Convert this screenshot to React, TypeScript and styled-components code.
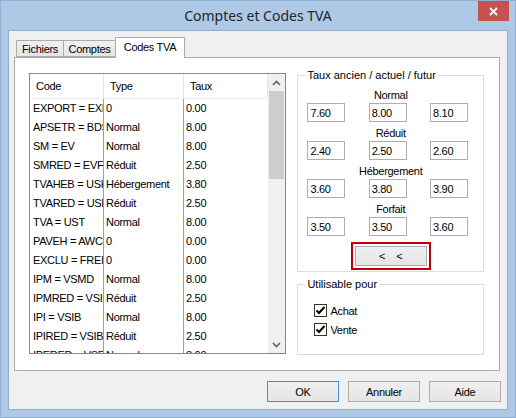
import React from 'react';
import styled, { createGlobalStyle } from 'styled-components';

const GlobalStyle = createGlobalStyle`
  html, body {
    margin: 0;
    padding: 0;
    background: #adc9e6;
  }
  * {
    box-sizing: border-box;
  }
`

const Window = styled.div`
  width: 516px;
  height: 418px;
  background: #adc9e6;
  border: 1px solid #8fafd6;
  display: flex;
  flex-direction: column;
  font-family: "Liberation Sans", Arial, sans-serif;
  font-size: 11px;
  letter-spacing: -0.3px;
  color: #000;
`

const TitleBar = styled.div`
  height: 29px;
  display: grid;
  grid-template-columns: 37px 1fr 31px;
  padding-right: 6px;
  align-items: start;
`

const Title = styled.div`
  grid-column: 2;
  text-align: center;
  font-family: "Noto Sans", "Open Sans", sans-serif;
  font-size: 14px;
  letter-spacing: 0;
  line-height: 29px;
  color: #262626;
`

const CloseBtn = styled.div`
  height: 20px;
  background: #c75050;
  display: flex;
  align-items: center;
  justify-content: center;
`

const Client = styled.div`
  flex: 1;
  min-height: 0;
  margin: 0 7px 7px;
  background: #f0f0f0;
  border: 1px solid #92abca;
  padding: 7px 7px 7px 5px;
  display: flex;
  flex-direction: column;
`

const TabStrip = styled.div`
  display: flex;
  align-items: flex-end;
  height: 20px;
  padding-left: 2px;
  margin-bottom: -1px;
  position: relative;
  z-index: 1;
`

const Tab = styled.div<{ $active?: boolean; $w: number }>`
  width: ${p => p.$w}px;
  height: ${p => (p.$active ? '21px' : '17px')};
  margin-bottom: ${p => (p.$active ? '0' : '1px')};
  margin-left: -1px;
  padding-top: ${p => (p.$active ? '2px' : '1px')};
  border: 1px solid #acacac;
  border-bottom: ${p => (p.$active ? 'none' : '1px solid #acacac')};
  background: ${p => (p.$active ? '#fff' : 'linear-gradient(#f0f0f0, #e5e5e5)')};
  line-height: 14px;
  text-align: center;
  white-space: nowrap;
  &:first-child {
    margin-left: 0;
  }
`

const Panel = styled.div`
  flex: 1;
  min-height: 0;
  background: #fff;
  border: 1px solid #acacac;
  padding: 11px 15px 16px 14px;
  display: flex;
  gap: 11px;
`

const List = styled.div`
  width: 258px;
  min-height: 0;
  margin-top: 4px;
  border: 1px solid #828790;
  display: grid;
  grid-template-columns: 1fr 17px;
  overflow: hidden;
`

const ListBody = styled.div`
  overflow: hidden;
`

const HeaderRow = styled.div`
  display: grid;
  grid-template-columns: 74px 80px 1fr;
  height: 25px;
  border-bottom: 1px solid #e5ecf4;
`

const HeaderCell = styled.div`
  padding-left: 6px;
  line-height: 24px;
  border-right: 1px solid #e5e5e5;
`

const Row = styled.div`
  display: grid;
  grid-template-columns: 74px 80px 1fr;
  height: 19px;
`

const Cell = styled.div<{ $pad: number; $line?: boolean }>`
  padding-left: ${p => p.$pad}px;
  line-height: 19px;
  white-space: nowrap;
  overflow: hidden;
  border-right: ${p => (p.$line ? '1px solid #a0a0a0' : 'none')};
`

const ScrollBar = styled.div`
  background: #f0f0f0;
  display: flex;
  flex-direction: column;
  min-height: 0;
`

const ScrollArrow = styled.div`
  height: 17px;
  flex-shrink: 0;
  display: flex;
  align-items: center;
  justify-content: center;
`

const Thumb = styled.div`
  height: 88px;
  flex-shrink: 0;
  margin: 0 1px;
  background: #cdcdcd;
`

const Spacer = styled.div`
  flex: 1;
`

const Side = styled.div`
  width: 187px;
  display: flex;
  flex-direction: column;
  gap: 6px;
`

const Group = styled.fieldset<{ $pt: number; $pb: number }>`
  margin: 0;
  border: 1px solid #dcdcdc;
  padding: ${p => p.$pt}px 6px ${p => p.$pb}px;
  min-width: 0;
`

const Legend = styled.legend`
  padding: 0 2px;
  line-height: 13px;
  margin-left: 1px;
  letter-spacing: 0;
`

const RateBlock = styled.div`
  display: flex;
  flex-direction: column;
  & + & {
    margin-top: 4px;
  }
`

const RateLabel = styled.div`
  height: 14px;
  line-height: 14px;
  margin-bottom: 1px;
  text-align: center;
`

const InputRow = styled.div`
  display: flex;
  justify-content: space-between;
  padding: 0 9px 0 3px;
`

const RateInput = styled.input`
  width: 38px;
  height: 19px;
  border: 1px solid #abadb3;
  padding: 0 0 0 2px;
  font-family: "Liberation Sans", Arial, sans-serif;
  font-size: 11px;
  letter-spacing: -0.3px;
  color: #000;
  background: #fff;
  outline: none;
`

const Highlight = styled.div`
  align-self: center;
  margin-top: 2px;
  width: 80px;
  height: 28px;
  border: 2px solid #c00000;
  padding: 2px;
`

const Button = styled.div<{ $default?: boolean }>`
  width: 72px;
  height: 21px;
  border: 1px solid ${p => (p.$default ? '#3c8fe3' : '#acacac')};
  background: linear-gradient(#f0f0f0, #e5e5e5);
  display: flex;
  align-items: center;
  justify-content: center;
  white-space: pre;
`

const ShiftButton = styled(Button)`
  width: 100%;
  height: 100%;
`

const CheckRow = styled.div`
  height: 19px;
  flex-shrink: 0;
  display: flex;
  align-items: center;
  gap: 3px;
  padding-left: 10px;
`

const CheckBox = styled.div`
  width: 13px;
  height: 13px;
  border: 1px solid #333;
  background: #fff;
  display: flex;
  align-items: center;
  justify-content: center;
`

const Footer = styled.div`
  display: flex;
  justify-content: flex-end;
  gap: 9px;
  padding-top: 10px;
  margin-right: -1px;
`

const rows = [
  ['EXPORT = EXP', '0', '0.00'],
  ['APSETR = BDS', 'Normal', '8.00'],
  ['SM = EV', 'Normal', '8.00'],
  ['SMRED = EVFR', 'Réduit', '2.50'],
  ['TVAHEB = USH', 'Hébergement', '3.80'],
  ['TVARED = USR', 'Réduit', '2.50'],
  ['TVA = UST', 'Normal', '8.00'],
  ['PAVEH = AWCH', '0', '0.00'],
  ['EXCLU = FREI', '0', '0.00'],
  ['IPM = VSMD', 'Normal', '8.00'],
  ['IPMRED = VSIR', 'Réduit', '2.50'],
  ['IPI = VSIB', 'Normal', '8.00'],
  ['IPIRED = VSIBR', 'Réduit', '2.50'],
  ['IPERED = VSER', 'Normal', '8.00'],
]

const rates = [
  { label: 'Normal', values: ['7.60', '8.00', '8.10'] },
  { label: 'Réduit', values: ['2.40', '2.50', '2.60'] },
  { label: 'Hébergement', values: ['3.60', '3.80', '3.90'] },
  { label: 'Forfait', values: ['3.50', '3.50', '3.60'] },
]

const Chevron = ({ up }: { up?: boolean }) => (
  <svg width="9" height="6" viewBox="0 0 9 6">
    <path d={up ? 'M1 5 L4.5 1.5 L8 5' : 'M1 1 L4.5 4.5 L8 1'} fill="none" stroke="#606060" strokeWidth="1.6" />
  </svg>
)

const Check = () => (
  <svg width="11" height="11" viewBox="0 0 11 11">
    <path d="M1.5 5.5 L4 8 L9.5 2" fill="none" stroke="#000" strokeWidth="2" />
  </svg>
)

const App = () => {
  return (
    <Window>
      <GlobalStyle />
      <TitleBar>
        <Title>Comptes et Codes TVA</Title>
        <CloseBtn>
          <svg width="9" height="9" viewBox="0 0 9 9">
            <path d="M1 1 L8 8 M8 1 L1 8" stroke="#fff" strokeWidth="1.8" />
          </svg>
        </CloseBtn>
      </TitleBar>
      <Client>
        <TabStrip>
          <Tab $w={48}>Fichiers</Tab>
          <Tab $w={53}>Comptes</Tab>
          <Tab $w={70} $active>Codes TVA</Tab>
        </TabStrip>
        <Panel>
          <List>
            <ListBody>
              <HeaderRow>
                <HeaderCell>Code</HeaderCell>
                <HeaderCell>Type</HeaderCell>
                <HeaderCell>Taux</HeaderCell>
              </HeaderRow>
              {rows.map(r => (
                <Row key={r[0]}>
                  <Cell $pad={3} $line>{r[0]}</Cell>
                  <Cell $pad={2} $line>{r[1]}</Cell>
                  <Cell $pad={2}>{r[2]}</Cell>
                </Row>
              ))}
            </ListBody>
            <ScrollBar>
              <ScrollArrow><Chevron up /></ScrollArrow>
              <Thumb />
              <Spacer />
              <ScrollArrow><Chevron /></ScrollArrow>
            </ScrollBar>
          </List>
          <Side>
            <Group $pt={6} $pb={1}>
              <Legend>Taux ancien / actuel / futur</Legend>
              {rates.map(rate => (
                <RateBlock key={rate.label}>
                  <RateLabel>{rate.label}</RateLabel>
                  <InputRow>
                    {rate.values.map((v, i) => (
                      <RateInput key={i} readOnly defaultValue={v} />
                    ))}
                  </InputRow>
                </RateBlock>
              ))}
              <RateBlock>
                <Highlight>
                  <ShiftButton>{'<    <'}</ShiftButton>
                </Highlight>
              </RateBlock>
            </Group>
            <Group $pt={10} $pb={15}>
              <Legend>Utilisable pour</Legend>
              <CheckRow>
                <CheckBox><Check /></CheckBox>
                Achat
              </CheckRow>
              <CheckRow>
                <CheckBox><Check /></CheckBox>
                Vente
              </CheckRow>
            </Group>
          </Side>
        </Panel>
        <Footer>
          <Button $default>OK</Button>
          <Button>Annuler</Button>
          <Button>Aide</Button>
        </Footer>
      </Client>
    </Window>
  );
};

export default App;
